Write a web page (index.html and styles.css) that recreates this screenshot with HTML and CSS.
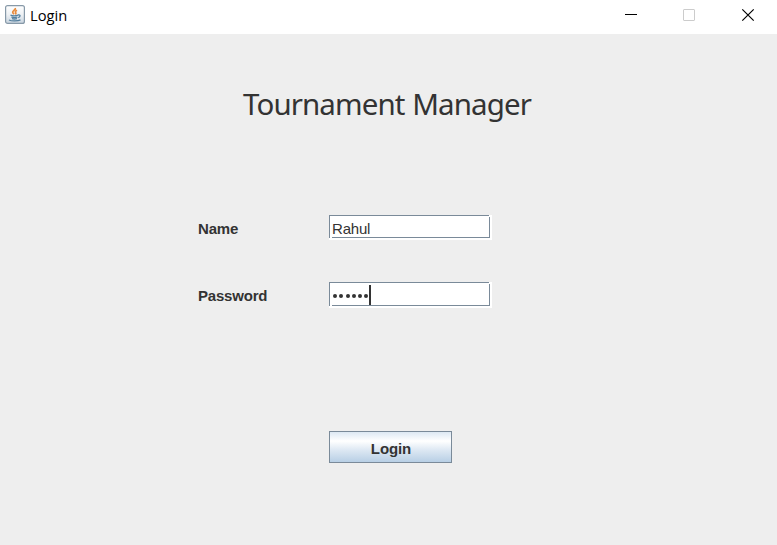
FILE: index.html
```html
<!DOCTYPE html>
<html lang="en">
<head>
<meta charset="utf-8">
<title>Login</title>
<link rel="stylesheet" href="styles.css">
</head>
<body>
<header class="titlebar">
  <svg class="app-icon" width="20" height="19" viewBox="0 0 20 19" fill="none">
    <defs><linearGradient id="tile" x1="0" y1="0" x2="0" y2="1"><stop offset="0" stop-color="#fff"/><stop offset=".5" stop-color="#eef1f4"/><stop offset="1" stop-color="#c8d4df"/></linearGradient></defs>
    <rect x=".6" y=".6" width="18.8" height="17.8" rx="2" fill="url(#tile)" stroke="#8799a8" stroke-width="1.2"/>
    <path d="M10.300 3c.8 2-3 2.700-2.600 4.300.1.800.9 1.300 1.300 1.900M12 5.300c-1.700.8-2 1.500-1.300 2.300.5.600.2 1.200-.4 1.700" stroke="#e88b3c" stroke-width="1.700"/>
    <path d="M5.500 10.200c2 .7 5.500.6 7.500 0M6.300 12c2 .7 4.400.6 6.200 0M7 13.700c1.600.5 3.500.4 5 0M4 15c2.500 1.300 9 1.200 11.500-.1M13 10c2.800-.6 2.600 1.800.2 2.600" stroke="#55809f" stroke-width="1.300"/>
  </svg>
  <span class="caption">Login</span>
  <svg class="controls" width="132" height="14" viewBox="0 0 132 14" fill="none">
    <path d="M0 6.500h12" stroke="#000"/>
    <rect x="58.500" y="1.500" width="11" height="11" rx=".5" stroke="#ccc"/>
    <path d="M117.300 1.300l11.400 11.400M128.700 1.300l-11.400 11.400" stroke="#000" stroke-width="1.200"/>
  </svg>
</header>
<main class="content">
  <h1 class="heading">Tournament Manager</h1>
  <div class="form">
    <div class="row">
      <span class="label">Name</span>
      <div class="field">Rahul</div>
    </div>
    <div class="row">
      <span class="label">Password</span>
      <div class="field field-password"><span class="dots"><i></i><i></i><i></i><i></i><i></i><i></i></span><span class="caret"></span></div>
    </div>
    <button class="login" type="button">Login</button>
  </div>
</main>
</body>
</html>
```
FILE: styles.css
```css
* { box-sizing: border-box; }
body {
  margin: 0;
  height: 545px;
  overflow: hidden;
  background: #eee;
  color: #333;
  font-family: "Liberation Sans", Arial, sans-serif;
}
.titlebar {
  display: flex;
  height: 34px;
  padding: 5px 20px 0 5px;
  background: #fff;
}
.caption {
  margin-left: 5px;
  font: 14.700px/20px "Open Sans", sans-serif;
  color: #000;
}
.controls { margin: 3px 0 0 auto; }
.heading {
  margin: 0;
  padding: 50px 0 0 243px;
  font: 400 29.500px/40px "Noto Sans", sans-serif;
  letter-spacing: -0.900px;
  word-spacing: 1px;
  white-space: nowrap;
}
.form {
  display: flex;
  flex-direction: column;
  padding: 91px 0 0 198px;
}
.row { display: flex; height: 67px; }
.label {
  width: 131px;
  font-size: 15px;
  font-weight: 700;
  line-height: 28px;
  letter-spacing: -0.2px;
}
.field {
  position: relative;
  width: 163px;
  height: 25px;
  padding-left: 3px;
  background: #fff;
  font-size: 15px;
  line-height: 28px;
  letter-spacing: -0.2px;
}
.field::before {
  content: "";
  position: absolute;
  inset: 0 3px 2px 0;
  border: solid #7a8a99;
  border-width: 1px 0 0 1px;
}
.field::after {
  content: "";
  position: absolute;
  inset: 2px 2px 2px 3px;
  border: solid #7a8a99;
  border-width: 0 1px 1px 0;
}
.field-password { display: flex; height: 26px; }
.dots { display: flex; gap: 2.300px; padding: 12px 0 0 1px; }
.dots i { width: 4px; height: 4px; border-radius: 50%; background: #333; }
.caret { width: 2px; height: 20px; margin: 3px 0 0 0.600px; background: #333; }
.login {
  width: 123px;
  height: 32px;
  margin: 82px 0 0 131px;
  padding: 4px 0 0 1px;
  border: 1px solid #7a8a99;
  background: linear-gradient(#dde8f3 0%, #fff 30%, #dde8f3 60%, #b8cfe5 100%);
  color: #333;
  font: 700 15px/20px "Liberation Sans", Arial, sans-serif;
  letter-spacing: -0.1px;
}
```
